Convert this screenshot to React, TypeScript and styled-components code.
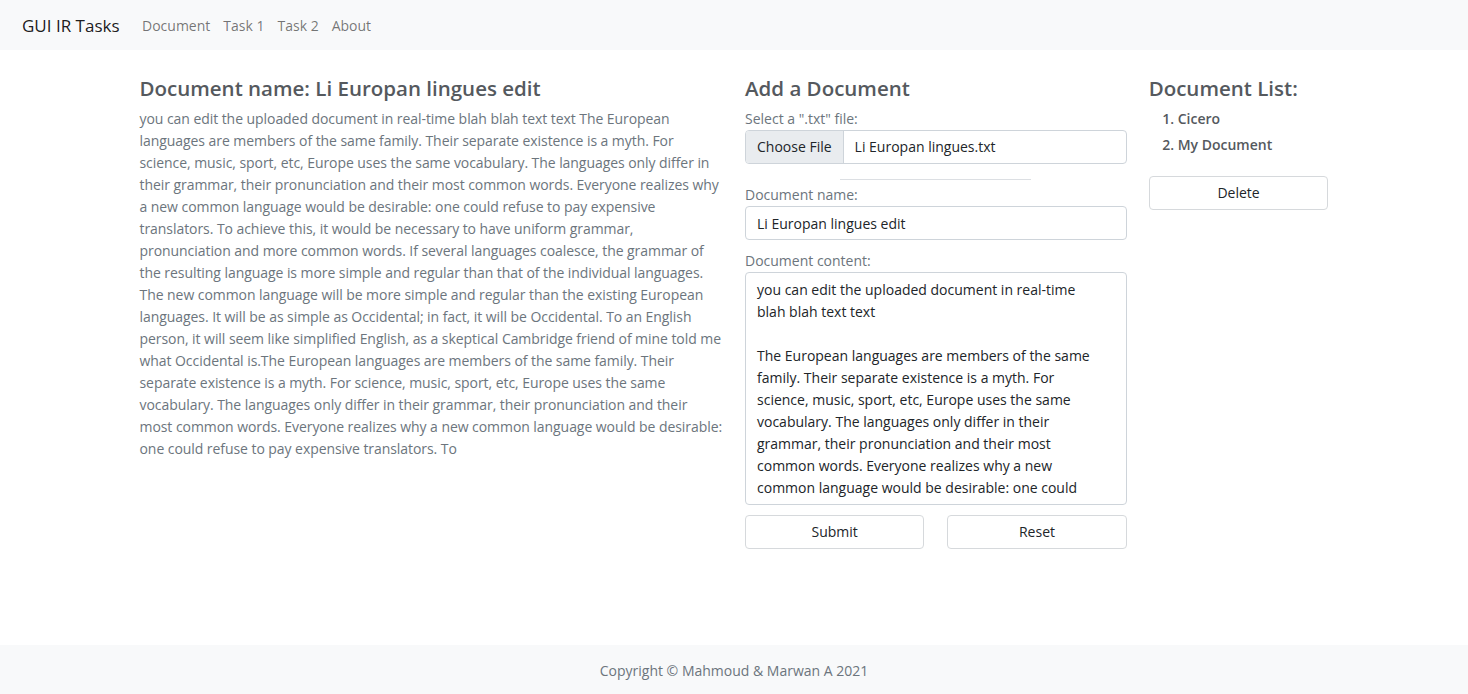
import React from "react";
import styled, { createGlobalStyle } from "styled-components";

const GlobalStyle = createGlobalStyle`
  html, body { margin: 0; padding: 0; }
  body {
    font-family: "Open Sans", "Noto Sans", sans-serif;
    font-size: 14px;
    line-height: 22px;
    color: #212529;
    background: #fff;
  }
  * { box-sizing: border-box; }
`;

const Page = styled.div`
  display: flex;
  flex-direction: column;
  min-height: 100vh;
`;

const NavBar = styled.nav`
  height: 50px;
  background: #f8f9fa;
  display: flex;
  align-items: center;
  padding: 2px 22px 0;
`;

const Brand = styled.a`
  font-size: 17px;
  color: rgba(0, 0, 0, 0.9);
  margin-right: 16px;
  text-decoration: none;
`;

const NavLink = styled.a`
  font-size: 14px;
  color: rgba(0, 0, 0, 0.55);
  padding: 0 6.5px;
  text-decoration: none;
`;

const Main = styled.main`
  flex: 1;
  display: flex;
  justify-content: center;
  padding-top: 25px;
`;

const Container = styled.div`
  width: 1211px;
  display: grid;
  grid-template-columns: 6fr 4fr 2fr;
`;

const Col = styled.section`
  padding: 0 11px;
  display: flex;
  flex-direction: column;
`;

const Heading = styled.h4`
  margin: 0 0 7px;
  font-size: 20.5px;
  line-height: 26px;
  font-weight: 600;
  color: #55595e;
`;

const Paragraph = styled.p`
  margin: 0;
  color: #6c757d;
  letter-spacing: -0.06px;
`;

const Label = styled.label`
  display: block;
  color: #6c757d;
`;

const FileGroup = styled.div`
  display: flex;
  height: 34px;
  border: 1px solid #ced4da;
  border-radius: 4px;
  overflow: hidden;
`;

const FileButton = styled.span`
  display: flex;
  align-items: center;
  padding: 0 11px;
  background: #e9ecef;
  border-right: 1px solid #ced4da;
  color: #212529;
`;

const FileName = styled.span`
  display: flex;
  align-items: center;
  padding: 0 11px;
  color: #212529;
`;

const Divider = styled.hr`
  width: 50%;
  margin: 15px auto 4px;
  border: 0;
  border-top: 1px solid #dcdfe3;
`;

const TextInput = styled.input`
  display: block;
  width: 100%;
  height: 34px;
  padding: 0 11px;
  border: 1px solid #ced4da;
  border-radius: 4px;
  font: inherit;
  color: #212529;
  margin-bottom: 10px;
  outline: none;
`;

const TextArea = styled.textarea`
  display: block;
  width: 100%;
  height: 233px;
  padding: 5.5px 28px 5.5px 11px;
  border: 1px solid #ced4da;
  border-radius: 4px;
  font: inherit;
  line-height: 22px;
  color: #212529;
  resize: none;
  overflow: hidden;
  outline: none;
`;

const ButtonRow = styled.div`
  display: grid;
  grid-template-columns: 1fr 1fr;
  column-gap: 23px;
  margin-top: 10px;
`;

const Button = styled.button`
  height: 34px;
  background: #fff;
  border: 1px solid #d6d9dc;
  border-radius: 4px;
  font: inherit;
  color: #212529;
  cursor: pointer;
`;

const DocList = styled.ol`
  margin: 0 0 16px;
  padding-left: 29px;
  color: #55595e;
  font-weight: 600;
`;

const DocItem = styled.li`
  margin-bottom: 4px;
`;

const Footer = styled.footer`
  height: 49px;
  padding-top: 3px;
  background: #f8f9fa;
  display: flex;
  align-items: center;
  justify-content: center;
  color: #6c757d;
`;

const leftText =
  "you can edit the uploaded document in real-time blah blah text text The European languages are members of the same family. Their separate existence is a myth. For science, music, sport, etc, Europe uses the same vocabulary. The languages only differ in their grammar, their pronunciation and their most common words. Everyone realizes why a new common language would be desirable: one could refuse to pay expensive translators. To achieve this, it would be necessary to have uniform grammar, pronunciation and more common words. If several languages coalesce, the grammar of the resulting language is more simple and regular than that of the individual languages. The new common language will be more simple and regular than the existing European languages. It will be as simple as Occidental; in fact, it will be Occidental. To an English person, it will seem like simplified English, as a skeptical Cambridge friend of mine told me what Occidental is.The European languages are members of the same family. Their separate existence is a myth. For science, music, sport, etc, Europe uses the same vocabulary. The languages only differ in their grammar, their pronunciation and their most common words. Everyone realizes why a new common language would be desirable: one could refuse to pay expensive translators. To";

const areaText =
  "you can edit the uploaded document in real-time\nblah blah text text\n\nThe European languages are members of the same family. Their separate existence is a myth. For science, music, sport, etc, Europe uses the same vocabulary. The languages only differ in their grammar, their pronunciation and their most common words. Everyone realizes why a new common language would be desirable: one could refuse to pay expensive translators. To";

export default function App() {
  return (
    <Page>
      <GlobalStyle />
      <NavBar>
        <Brand href="#">GUI IR Tasks</Brand>
        <NavLink href="#">Document</NavLink>
        <NavLink href="#">Task 1</NavLink>
        <NavLink href="#">Task 2</NavLink>
        <NavLink href="#">About</NavLink>
      </NavBar>
      <Main>
        <Container>
          <Col>
            <Heading>Document name: Li Europan lingues edit</Heading>
            <Paragraph>{leftText}</Paragraph>
          </Col>
          <Col>
            <Heading>Add a Document</Heading>
            <Label>Select a ".txt" file:</Label>
            <FileGroup>
              <FileButton>Choose File</FileButton>
              <FileName>Li Europan lingues.txt</FileName>
            </FileGroup>
            <Divider />
            <Label>Document name:</Label>
            <TextInput defaultValue="Li Europan lingues edit" />
            <Label>Document content:</Label>
            <TextArea defaultValue={areaText} spellCheck={false} />
            <ButtonRow>
              <Button>Submit</Button>
              <Button>Reset</Button>
            </ButtonRow>
          </Col>
          <Col>
            <Heading>Document List:</Heading>
            <DocList>
              <DocItem>Cicero</DocItem>
              <DocItem>My Document</DocItem>
            </DocList>
            <Button>Delete</Button>
          </Col>
        </Container>
      </Main>
      <Footer>Copyright © Mahmoud &amp; Marwan A 2021</Footer>
    </Page>
  );
}
